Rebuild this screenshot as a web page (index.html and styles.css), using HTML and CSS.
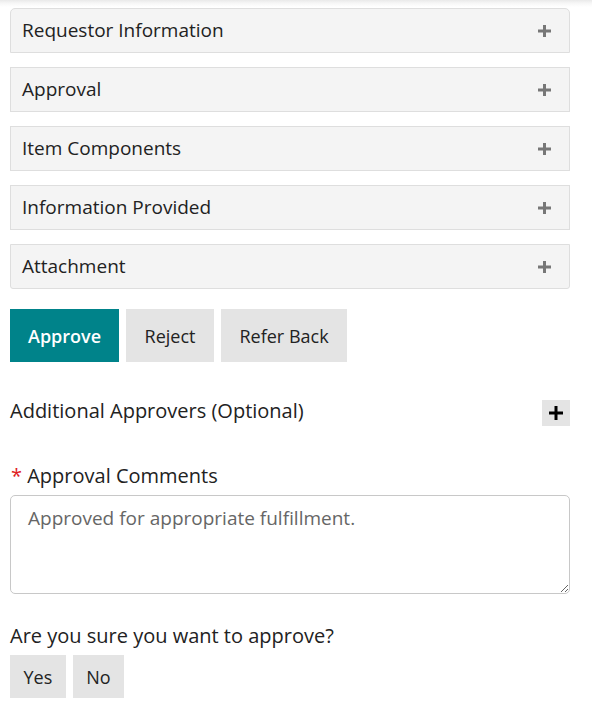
FILE: index.html
```html
<!DOCTYPE html>
<html lang="en">
<head>
<meta charset="utf-8">
<title>Approval</title>
<link rel="stylesheet" href="styles.css">
</head>
<body>
<div class="page">
  <div class="accordion">
    <div class="panel first"><span>Requestor Information</span><svg class="plus" width="13" height="12" viewBox="0 0 13 12"><rect x="0" y="4.5" width="13" height="3" fill="#777"/><rect x="5" y="0" width="3" height="12" fill="#777"/></svg></div>
    <div class="panel"><span>Approval</span><svg class="plus" width="13" height="12" viewBox="0 0 13 12"><rect x="0" y="4.5" width="13" height="3" fill="#777"/><rect x="5" y="0" width="3" height="12" fill="#777"/></svg></div>
    <div class="panel"><span>Item Components</span><svg class="plus" width="13" height="12" viewBox="0 0 13 12"><rect x="0" y="4.5" width="13" height="3" fill="#777"/><rect x="5" y="0" width="3" height="12" fill="#777"/></svg></div>
    <div class="panel"><span>Information Provided</span><svg class="plus" width="13" height="12" viewBox="0 0 13 12"><rect x="0" y="4.5" width="13" height="3" fill="#777"/><rect x="5" y="0" width="3" height="12" fill="#777"/></svg></div>
    <div class="panel last"><span>Attachment</span><svg class="plus" width="13" height="12" viewBox="0 0 13 12"><rect x="0" y="4.5" width="13" height="3" fill="#777"/><rect x="5" y="0" width="3" height="12" fill="#777"/></svg></div>
  </div>

  <div class="actions">
    <button class="btn primary">Approve</button>
    <button class="btn">Reject</button>
    <button class="btn">Refer Back</button>
  </div>

  <div class="approvers">
    <span>Additional Approvers (Optional)</span>
    <button class="add-btn" aria-label="Add"><svg width="14" height="14" viewBox="0 0 14 14"><rect x="0" y="5.5" width="14" height="3" fill="#000"/><rect x="5.5" y="0" width="3" height="14" fill="#000"/></svg></button>
  </div>

  <label class="field-label"><span class="req">*</span> Approval Comments</label>
  <textarea class="comments">Approved for appropriate fulfillment.</textarea>

  <p class="question">Are you sure you want to approve?</p>
  <div class="confirm">
    <button class="btn small">Yes</button>
    <button class="btn small">No</button>
  </div>
</div>
</body>
</html>
```

FILE: styles.css
```css
html {
  background: linear-gradient(to bottom, #e9e9e9 0, #f6f6f6 3px, #ffffff 7px) no-repeat #fff;
}
body {
  margin: 0;
  font-family: "Open Sans", "Liberation Sans", sans-serif;
  font-size: 20px;
  color: #222;
}
.page {
  padding: 8px 22px 0 10px;
  display: flex;
  flex-direction: column;
}
.accordion {
  display: flex;
  flex-direction: column;
  gap: 14px;
}
.panel {
  height: 45px;
  box-sizing: border-box;
  background: #f4f4f4;
  border: 1px solid #dedede;
  display: flex;
  align-items: center;
  justify-content: space-between;
  padding: 0 18px 0 11px;
  font-size: 19px;
  line-height: 24px;
}
.panel span {
  margin-top: -2px;
}
.panel.first {
  border-radius: 5px 5px 0 0;
}
.panel.last {
  border-radius: 0 0 3px 3px;
}
.plus {
  display: block;
}
.actions {
  margin-top: 20px;
  display: flex;
  gap: 7px;
}
.btn {
  font-family: inherit;
  font-size: 18px;
  color: #222;
  background: #e4e4e4;
  border: none;
  border-radius: 0;
  height: 53px;
  padding: 0 18.5px;
  cursor: pointer;
}
.btn.primary {
  background: #00838a;
  color: #fff;
  font-weight: 600;
  padding: 0 18px;
}
.approvers {
  margin-top: 38px;
  display: flex;
  align-items: center;
  justify-content: space-between;
  line-height: 26px;
}
.approvers span {
  margin-top: -4px;
}
.add-btn {
  width: 28px;
  height: 26px;
  background: #e4e4e4;
  border: none;
  padding: 0;
  display: flex;
  align-items: center;
  justify-content: center;
}
.field-label {
  margin-top: 37px;
  line-height: 26px;
}
.req {
  color: #e0201e;
  margin-left: 1px;
}
.comments {
  margin-top: 6px;
  height: 99px;
  box-sizing: border-box;
  border: 1px solid #c8c8c8;
  border-radius: 5px;
  padding: 9px 17px;
  font-family: inherit;
  font-size: 19px;
  line-height: 26px;
  color: #666;
  resize: vertical;
}
.question {
  margin: 29px 0 0;
  line-height: 26px;
}
.confirm {
  margin-top: 6px;
  display: flex;
  gap: 7px;
}
.btn.small {
  height: 43px;
  padding: 0 13.5px;
}
```
